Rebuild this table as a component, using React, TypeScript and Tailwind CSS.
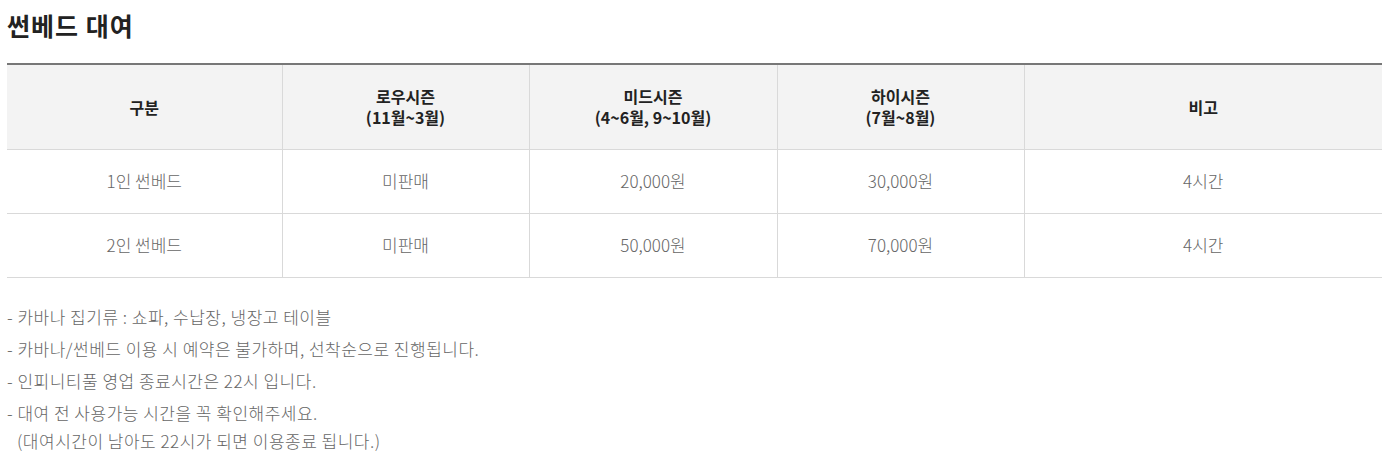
import React from 'react';

const ROWS = [
  { name: '1인 썬베드', low: '미판매', mid: '20,000원', high: '30,000원', note: '4시간' },
  { name: '2인 썬베드', low: '미판매', mid: '50,000원', high: '70,000원', note: '4시간' },
];

const NOTES = [
  '카바나 집기류 : 쇼파, 수납장, 냉장고 테이블',
  '카바나/썬베드 이용 시 예약은 불가하며, 선착순으로 진행됩니다.',
  '인피니티풀 영업 종료시간은 22시 입니다.',
];

const HEADS = [
  ['구분'],
  ['로우시즌', '(11월~3월)'],
  ['미드시즌', '(4~6월, 9~10월)'],
  ['하이시즌', '(7월~8월)'],
  ['비고'],
];

export default function App() {
  return (
    <div
      className="bg-white px-[7px] pt-[8px] text-[#666]"
      style={{ fontFamily: '"Noto Sans CJK KR", "Noto Sans", sans-serif' }}
    >
      <h2 className="text-[25px] font-bold leading-[34px] tracking-[1px] text-[#222]">썬베드 대여</h2>

      <table className="mt-[21px] w-[1375px] table-fixed border-collapse border-t-2 border-t-[#777] text-center">
        <colgroup>
          <col className="w-[275px]" />
          <col className="w-[247px]" />
          <col className="w-[248px]" />
          <col className="w-[247px]" />
          <col className="w-[358px]" />
        </colgroup>
        <thead>
          <tr className="h-[85px] bg-[#f3f3f3] text-[16px] font-bold text-[#222]">
            {HEADS.map((h, i) => (
              <th key={i} className={i === 0 ? 'border-b border-[#d9d9d9]' : 'border-b border-l border-[#d9d9d9]'}>
                <div className="flex flex-col items-center gap-[1px]">
                  {h.map((line) => (
                    <span key={line} className="block leading-[20px]">
                      {line}
                    </span>
                  ))}
                </div>
              </th>
            ))}
          </tr>
        </thead>
        <tbody className="text-[17px] font-light">
          {ROWS.map((r) => (
            <tr key={r.name} className="h-[64px]">
              <td className="border-b border-[#d9d9d9]">{r.name}</td>
              <td className="border-b border-l border-[#d9d9d9]">{r.low}</td>
              <td className="border-b border-l border-[#d9d9d9]">{r.mid}</td>
              <td className="border-b border-l border-[#d9d9d9]">{r.high}</td>
              <td className="border-b border-l border-[#d9d9d9]">{r.note}</td>
            </tr>
          ))}
        </tbody>
      </table>

      <ul className="mt-[25px] flex flex-col gap-[4px] text-[17px] font-light leading-[28px] tracking-[0.5px]">
        {NOTES.map((n) => (
          <li key={n}>- {n}</li>
        ))}
        <li>
          - 대여 전 사용가능 시간을 꼭 확인해주세요.
          <br />
          <span className="pl-[10px]">(대여시간이 남아도 22시가 되면 이용종료 됩니다.)</span>
        </li>
      </ul>
    </div>
  );
}
